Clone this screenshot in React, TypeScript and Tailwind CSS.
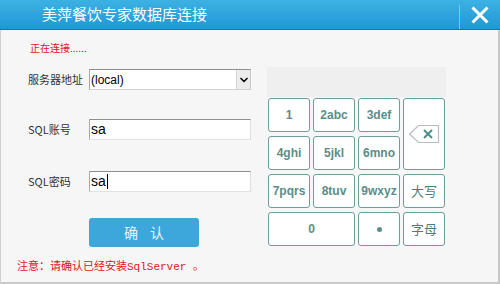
import { ChevronDown } from 'lucide-react';

const keys: { label: string; cls?: string }[] = [
  { label: '1' },
  { label: '2abc' },
  { label: '3def' },
  { label: 'BK', cls: 'row-span-2' },
  { label: '4ghi' },
  { label: '5jkl' },
  { label: '6mno' },
  { label: '7pqrs' },
  { label: '8tuv' },
  { label: '9wxyz' },
  { label: '大写' },
  { label: '0', cls: 'col-span-2' },
  { label: '•' },
  { label: '字母' },
];

function BackspaceIcon() {
  return (
    <svg width="32" height="20" viewBox="0 0 32 20">
      <path d="M10.5 1.5 H30.5 V18.5 H10.5 L1.5 10 Z" fill="#fff" stroke="#b8bcbc" strokeWidth="1.2" />
      <path d="M16 6 L24 14 M24 6 L16 14" stroke="#4d8e88" strokeWidth="2" />
    </svg>
  );
}

function Field({ label, value, cursor }: { label: string; value: string; cursor?: boolean }) {
  return (
    <div className="flex items-center h-[21px]">
      <span className="w-[61px] pl-[27px] box-content text-[11px] text-[#333] whitespace-nowrap">{label}</span>
      <div className="w-[162px] h-[21px] bg-white border border-t-[#8f8f8f] border-l-[#a9a9a9] border-r-[#dedede] border-b-[#e2e2e2] flex items-center pl-[1px] text-[14px] text-black font-['Liberation_Sans',sans-serif]">
        {value}
        {cursor && <span className="ml-[1px] w-[1px] h-[15px] bg-black" />}
      </div>
    </div>
  );
}

export default function App() {
  return (
    <div className="w-[500px] h-[284px] flex flex-col bg-white font-['Noto_Sans_CJK_SC','Liberation_Sans',sans-serif]">
      {/* title bar */}
      <div className="h-[30px] flex items-stretch bg-gradient-to-b from-[#3cb1e3] to-[#1e98d5] border-b border-[#1878a8]">
        <div className="flex-1 pl-[42px] flex items-center text-[15px] text-white">美萍餐饮专家数据库连接</div>
        <div className="w-px mt-[5px] bg-[#7ccbee]" />
        <div className="w-[40px] flex items-center justify-center">
          <svg width="18" height="18" viewBox="0 0 18 18">
            <path d="M1.5 1.5 L16.5 16.5 M16.5 1.5 L1.5 16.5" stroke="#fff" strokeWidth="3" />
          </svg>
        </div>
      </div>

      {/* body */}
      <div className="flex-1 flex bg-[#f6f6f7] border-l border-r-2 border-b-2 border-l-[#cfcfcf] border-r-[#c6c6c6] border-b-[#c8c8c8]">
        <div className="w-[266px] flex flex-col">
          <div className="pl-[29px] pt-[12px] text-[10px] leading-[12px] text-[#e0141b]">正在连接......</div>

          <div className="mt-[15px] flex items-center h-[21px]">
            <span className="w-[61px] pl-[27px] box-content text-[11px] text-[#333] whitespace-nowrap">服务器地址</span>
            <div className="w-[162px] h-[21px] bg-white border border-t-[#8f8f8f] border-l-[#a9a9a9] border-r-[#c9c9c9] border-b-[#d2d2d2] flex items-stretch">
              <span className="flex-1 flex items-center pl-[1px] text-[12px] text-black font-['Liberation_Sans',sans-serif]">(local)</span>
              <span className="w-[14px] bg-[#ececec] border-l border-[#d4d4d4] flex items-center justify-center">
                <ChevronDown size={12} strokeWidth={3.5} color="#111" />
              </span>
            </div>
          </div>

          <div className="mt-[29px]">
            <Field label="SQL账号" value="sa" />
          </div>
          <div className="mt-[31px]">
            <Field label="SQL密码" value="sa" cursor />
          </div>

          <div className="mt-[26px] ml-[88px] w-[110px] h-[29px] rounded-[3px] bg-[#3da7dc] flex items-center justify-center gap-[12px] text-[14px] text-[#e6f3fa]">
            <span>确</span>
            <span>认</span>
          </div>

          <div className="mt-[13px] pl-[16px] text-[11px] leading-[14px] text-[#e0141b] whitespace-nowrap font-['Liberation_Mono','Noto_Sans_CJK_SC',monospace]">
            注意：请确认已经安装SqlServer 。
          </div>
        </div>

        <div className="pt-[37px] flex flex-col">
          <div className="w-[179px] h-[30px] bg-[#efefef]" />
          <div className="mt-[1px] ml-[1px] grid grid-cols-[repeat(4,42px)] grid-rows-[repeat(4,34px)] gap-x-[3px] gap-y-[4px]">
            {keys.map((k) => (
              <div
                key={k.label}
                className={`${k.cls ?? ''} bg-white border border-[#6f9e9a] rounded-[3px] flex items-center justify-center text-[12px] font-bold text-[#5a8d89]`}
              >
                {k.label === 'BK' ? (
                  <BackspaceIcon />
                ) : k.label === '大写' || k.label === '字母' ? (
                  <span className="font-normal text-[13px] text-[#4f7f7b]">{k.label}</span>
                ) : k.label === '•' ? (
                  <span className="w-[5px] h-[5px] rounded-full bg-[#5a8d89]" />
                ) : (
                  <span className="font-['Liberation_Sans',sans-serif]">{k.label}</span>
                )}
              </div>
            ))}
          </div>
        </div>
      </div>
    </div>
  );
}
